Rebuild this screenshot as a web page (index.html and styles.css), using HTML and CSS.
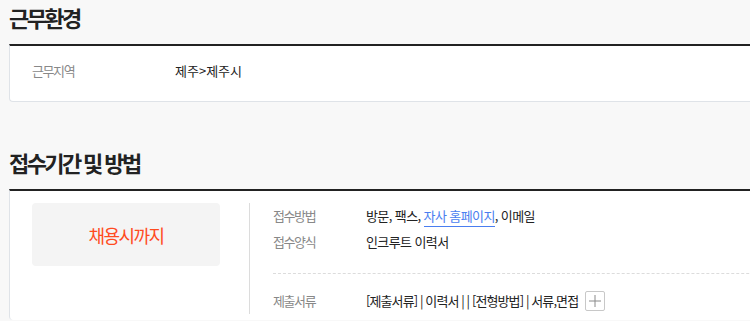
FILE: index.html
```html
<!DOCTYPE html>
<html lang="ko">
<head>
  <meta charset="UTF-8" />
  <title>채용정보</title>
  <link rel="stylesheet" href="styles.css">
</head>
<body>
  <div class="wrap">
    <h2 class="sec-title">근무환경</h2>
    <div class="sec-box">
      <div class="env-row">
        <span class="env-label">근무지역</span>
        <span class="env-value">제주&gt;제주시</span>
      </div>
    </div>

    <h2 class="sec-title second">접수기간 및 방법</h2>
    <div class="sec-box apply">
      <div class="deadline">채용시까지</div>
      <div class="apply-info">
        <dl class="info-row">
          <dt>접수방법</dt>
          <dd>방문, 팩스, <a class="home-link" href="#">자사 홈페이지</a>, 이메일</dd>
        </dl>
        <dl class="info-row">
          <dt>접수양식</dt>
          <dd>인크루트 이력서</dd>
        </dl>
        <dl class="info-row docs">
          <dt>제출서류</dt>
          <dd><span class="docs-text">[제출서류] | 이력서 | | [전형방법] | 서류,면접</span><button class="more-btn" type="button"><svg width="12" height="12" viewBox="0 0 12 12"><path d="M6 0v12M0 6h12" stroke="#8a8a8a" stroke-width="1" fill="none"/></svg></button></dd>
        </dl>
      </div>
    </div>
  </div>
</body>
</html>
```

FILE: styles.css
```css
body {
  margin: 0;
  background-color: #f8f8f8;
  font-family: "Noto Sans CJK KR", "Noto Sans", sans-serif;
  color: #222;
  overflow: hidden;
}

.wrap {
  width: 800px;
  padding-left: 9px;
}

.sec-title {
  margin: 0 0 10px;
  font-size: 22px;
  line-height: 34px;
  font-weight: bold;
  letter-spacing: -2.6px;
  color: #222;
}

.sec-title.second {
  margin-top: 43px;
}

.sec-box {
  background: #fff;
  border-top: 2px solid #222;
  border-left: 1px solid #dfe3e8;
  border-bottom: 1px solid #dfe3e8;
  border-radius: 0 0 0 4px;
}

.env-row {
  display: flex;
  padding: 15px 0 20px 22px;
  font-size: 13px;
  line-height: 20px;
  letter-spacing: -1.4px;
}

.env-label {
  width: 143px;
  color: #888;
}

.env-value {
  color: #222;
  letter-spacing: 0;
}

.sec-box.apply {
  display: flex;
  align-items: flex-start;
  padding: 12px 0 6px 22px;
  border-bottom: none;
}

.deadline {
  width: 188px;
  height: 63px;
  display: flex;
  align-items: center;
  justify-content: center;
  background: #f4f4f4;
  border-radius: 4px;
  color: #ff4b1f;
  font-size: 18px;
  letter-spacing: -1.6px;
}

.apply-info {
  flex: 1;
  margin-left: 29px;
  padding-left: 23px;
  border-left: 1px solid #dcdcdc;
  font-size: 13px;
}

.info-row {
  display: flex;
  margin: 0;
  line-height: 26px;
}

.info-row dt {
  width: 93px;
  color: #888;
  letter-spacing: -1.4px;
}

.info-row dd {
  margin: 0;
  display: flex;
  align-items: center;
  color: #222;
  letter-spacing: -0.6px;
  white-space: pre;
}

.home-link {
  color: #4a7ef0;
  text-decoration: none;
  border-bottom: 1px solid #4a7ef0;
  line-height: 21px;
}

.info-row.docs {
  margin-top: 18px;
  padding-top: 14px;
  border-top: 1px dashed #dcdcdc;
}

.docs-text {
  color: #222;
  letter-spacing: -0.9px;
}

.more-btn {
  width: 20px;
  height: 20px;
  margin-left: 7px;
  padding: 0;
  display: flex;
  align-items: center;
  justify-content: center;
  background: #fff;
  border: 1px solid #c8c8c8;
  border-radius: 2px;
}
```
